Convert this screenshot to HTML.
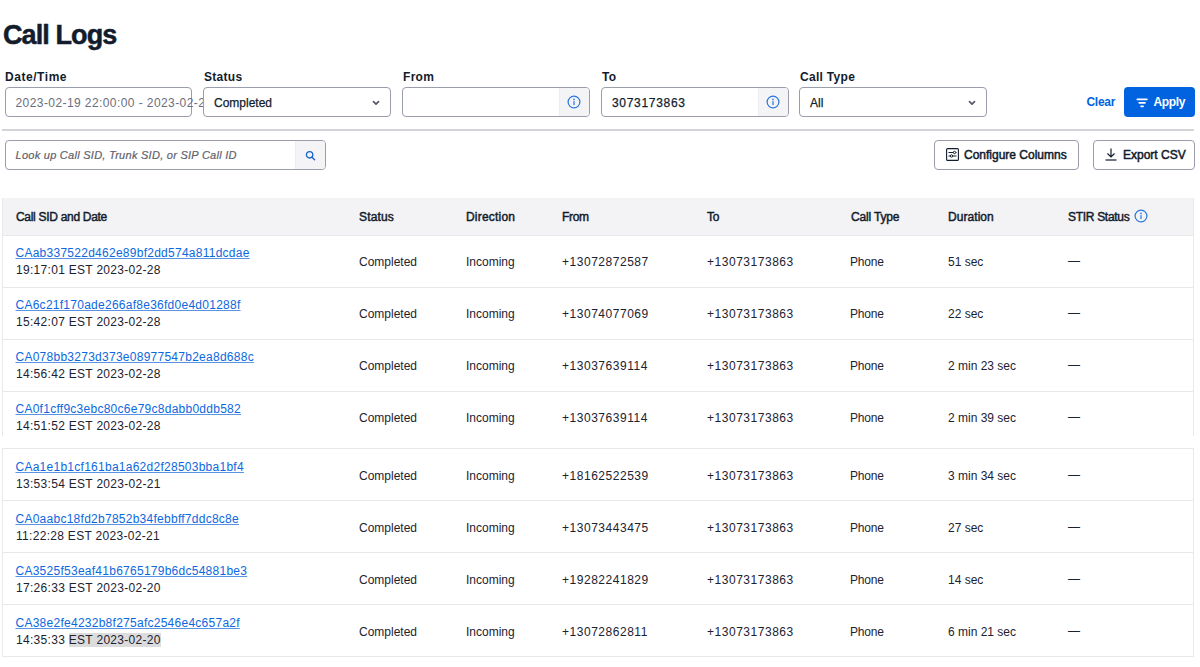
<!DOCTYPE html>
<html><head><meta charset="utf-8">
<style>
*{box-sizing:border-box;margin:0;padding:0}
html,body{width:1200px;height:667px;overflow:hidden;background:#fff}
body{font-family:"Liberation Sans",sans-serif;color:#121c2d;position:relative}
.abs{position:absolute}
h1{position:absolute;left:3px;top:19px;font-size:27px;line-height:32px;font-weight:700;color:#121c2d;letter-spacing:-0.9px;-webkit-text-stroke:0.5px #121c2d;white-space:nowrap}
.lbl{position:absolute;top:70px;letter-spacing:0.3px;font-size:12px;font-weight:700;color:#121c2d;white-space:nowrap}
.inp{position:absolute;top:87px;height:30px;border:1px solid #9a9dab;border-radius:4px;background:#fff;overflow:visible}
.inp .t{position:absolute;left:10px;top:8px;font-size:12px;white-space:nowrap}
.addon{position:absolute;right:0;top:0;bottom:0;width:30px;background:#f4f4f6;border-left:1px solid #ececf1;border-radius:0 3px 3px 0}
.med{-webkit-text-stroke:0.25px #121c2d}
.chev{position:absolute;right:10px;top:12px}
.divider{position:absolute;left:2px;width:1192px;height:2px;background:#d3d4d8}
.btn2{position:absolute;top:140px;height:30px;border:1px solid #9a9dab;border-radius:4px;background:#fff;font-size:12px;font-weight:400;-webkit-text-stroke:0.5px #121c2d;white-space:nowrap;letter-spacing:0px}
table{border-collapse:collapse}
.tbl{position:absolute;left:2px;width:1192px;overflow:hidden;border-left:1px solid #e9e9ec;border-right:1px solid #e9e9ec}
.row{position:absolute;left:0;width:1190px;height:52px;border-top:1px solid #e8e8ea}
.cell{position:absolute;font-size:12px;white-space:nowrap;color:#1c2230}
.hd{font-weight:400;-webkit-text-stroke:0.45px #121c2d;color:#121c2d;letter-spacing:-0.3px}
a{color:#0c68de;text-decoration:underline;text-decoration-color:#5b93e3;text-decoration-thickness:1px;text-underline-offset:0.6px;text-decoration-skip-ink:none;letter-spacing:0.26px}
.dt{letter-spacing:0.3px}
.num{letter-spacing:0.53px}
</style></head>
<body>
<h1>Call Logs</h1>

<div class="lbl" style="left:5px;letter-spacing:0.55px">Date/Time</div>
<div class="lbl" style="left:204px">Status</div>
<div class="lbl" style="left:403px">From</div>
<div class="lbl" style="left:602px">To</div>
<div class="lbl" style="left:800px">Call Type</div>

<div class="inp" style="left:5px;width:187px"><div class="t" style="color:#6b6e7c;letter-spacing:0.42px;left:9.5px">2023-02-19 22:00:00 - 2023-02-28</div></div>
<div class="inp" style="left:203px;width:188px;z-index:2"><div class="t med">Completed</div>
  <svg class="chev" width="8" height="6" viewBox="0 0 8 6"><path d="M1.5 1.6L4 4.1L6.5 1.6" fill="none" stroke="#555a66" stroke-width="1.7" stroke-linecap="round" stroke-linejoin="round"/></svg></div>
<div class="inp" style="left:402px;width:188px"><div class="addon"><svg style="position:absolute;left:7.3px;top:7px" width="14" height="14" viewBox="0 0 14 14"><circle cx="7" cy="7" r="5.9" fill="none" stroke="#2a76dc" stroke-width="1.2"/><circle cx="7" cy="4.4" r="0.85" fill="#2a76dc"/><rect x="6.4" y="6.1" width="1.2" height="4" fill="#2a76dc"/></svg></div></div>
<div class="inp" style="left:601px;width:188px"><div class="t med" style="letter-spacing:0.7px">3073173863</div><div class="addon"><svg style="position:absolute;left:7.3px;top:7px" width="14" height="14" viewBox="0 0 14 14"><circle cx="7" cy="7" r="5.9" fill="none" stroke="#2a76dc" stroke-width="1.2"/><circle cx="7" cy="4.4" r="0.85" fill="#2a76dc"/><rect x="6.4" y="6.1" width="1.2" height="4" fill="#2a76dc"/></svg></div></div>
<div class="inp" style="left:799px;width:188px"><div class="t med">All</div>
  <svg class="chev" width="8" height="6" viewBox="0 0 8 6"><path d="M1.5 1.6L4 4.1L6.5 1.6" fill="none" stroke="#555a66" stroke-width="1.7" stroke-linecap="round" stroke-linejoin="round"/></svg></div>

<div class="abs" style="left:1086.5px;top:95px;font-size:12px;font-weight:700;color:#0263e0;letter-spacing:-0.3px">Clear</div>
<div class="abs" style="left:1124px;top:87px;width:71px;height:30px;background:#0263e0;border-radius:4px;color:#fff;font-size:12px;font-weight:700">
  <svg style="position:absolute;left:11px;top:9.5px" width="14" height="12" viewBox="0 0 14 12"><path d="M2.3 2.3H11.9M4.2 5.8H10M6.1 9.3H8.1" stroke="#fff" stroke-width="1.7" stroke-linecap="round"/></svg>
  <span style="position:absolute;left:29.5px;top:8px;letter-spacing:-0.35px">Apply</span></div>

<div class="divider" style="top:129px"></div>

<div class="inp" style="left:5px;top:140px;width:321px;">
  <div class="t" style="font-style:italic;color:#5f626c;letter-spacing:0.27px;font-size:11px;top:8px;left:9.5px;-webkit-text-stroke:0.2px #5f626c">Look up Call SID, Trunk SID, or SIP Call ID</div>
  <div class="addon" style="width:30px"><svg style="position:absolute;left:9px;top:8.5px" width="11" height="11" viewBox="0 0 11 11"><circle cx="4.6" cy="4.8" r="3.2" fill="none" stroke="#1a63d0" stroke-width="1.3"/><path d="M7 7.2L9.6 9.8" stroke="#1a63d0" stroke-width="1.4" stroke-linecap="round"/></svg></div>
</div>

<div class="btn2" style="left:934px;width:145px">
  <svg style="position:absolute;left:10.5px;top:7.2px" width="13" height="13" viewBox="0 0 13 13"><rect x="0.6" y="0.6" width="11.8" height="11.8" rx="1" fill="none" stroke="#121c2d" stroke-width="1.1"/><path d="M2.5 4.5H10.5M2.5 8H10.5" stroke="#121c2d" stroke-width="1"/><circle cx="8.5" cy="4.5" r="1.2" fill="#fff" stroke="#121c2d" stroke-width="1"/><circle cx="5.5" cy="8" r="1.2" fill="#fff" stroke="#121c2d" stroke-width="1"/></svg>
  <span style="position:absolute;left:29px;top:7px">Configure Columns</span></div>
<div class="btn2" style="left:1093px;width:102px">
  <svg style="position:absolute;left:11px;top:7px" width="12" height="13" viewBox="0 0 12 13"><path d="M6 0.5V9M2.5 5.5L6 9L9.5 5.5" fill="none" stroke="#121c2d" stroke-width="1.2"/><path d="M0.5 12H11.5" stroke="#121c2d" stroke-width="1.2"/></svg>
  <span style="position:absolute;left:29px;top:7px">Export CSV</span></div>



<!-- table part 1 -->
<div class="tbl" style="top:198px;height:238px">
  <div class="abs" style="left:0;top:0;width:1190px;height:37px;background:#f3f3f5">
    <div class="cell hd" style="left:13px;top:12px">Call SID and Date</div>
    <div class="cell hd" style="left:356px;letter-spacing:0.15px;top:12px">Status</div>
    <div class="cell hd" style="left:463px;letter-spacing:0.2px;top:12px">Direction</div>
    <div class="cell hd" style="left:559px;top:12px">From</div>
    <div class="cell hd" style="left:704px;top:12px">To</div>
    <div class="cell hd" style="left:848px;letter-spacing:-0.17px;top:12px">Call Type</div>
    <div class="cell hd" style="left:945px;letter-spacing:0.06px;top:12px">Duration</div>
    <div class="cell hd" style="left:1065px;top:12px">STIR Status</div>
    <svg style="position:absolute;left:1131px;top:11px" width="14" height="14" viewBox="0 0 14 14"><circle cx="7" cy="7" r="5.9" fill="none" stroke="#2a76dc" stroke-width="1.2"/><circle cx="7" cy="4.4" r="0.85" fill="#2a76dc"/><rect x="6.4" y="6.1" width="1.2" height="4" fill="#2a76dc"/></svg>
  </div>
  <div class="row" style="top:37px"><div style="position:absolute;left:0;top:0px">
    <div class="cell" style="left:12.5px;top:10px"><a>CAab337522d462e89bf2dd574a811dcdae</a></div>
    <div class="cell dt" style="left:13px;top:27px">19:17:01 EST 2023-02-28</div>
    <div class="cell" style="left:356px;top:19px">Completed</div>
    <div class="cell" style="left:463px;top:19px">Incoming</div>
    <div class="cell num" style="left:559px;top:19px">+13072872587</div>
    <div class="cell num" style="left:704px;top:19px">+13073173863</div>
    <div class="cell" style="left:847px;top:19px;letter-spacing:-0.2px">Phone</div>
    <div class="cell" style="left:945px;top:19px">51 sec</div>
    <div class="cell" style="left:1065px;top:18px">&mdash;</div>
  </div></div>
<div class="row" style="top:89px"><div style="position:absolute;left:0;top:0px">
    <div class="cell" style="left:12.5px;top:10px"><a>CA6c21f170ade266af8e36fd0e4d01288f</a></div>
    <div class="cell dt" style="left:13px;top:27px">15:42:07 EST 2023-02-28</div>
    <div class="cell" style="left:356px;top:19px">Completed</div>
    <div class="cell" style="left:463px;top:19px">Incoming</div>
    <div class="cell num" style="left:559px;top:19px">+13074077069</div>
    <div class="cell num" style="left:704px;top:19px">+13073173863</div>
    <div class="cell" style="left:847px;top:19px;letter-spacing:-0.2px">Phone</div>
    <div class="cell" style="left:945px;top:19px">22 sec</div>
    <div class="cell" style="left:1065px;top:18px">&mdash;</div>
  </div></div>
<div class="row" style="top:141px"><div style="position:absolute;left:0;top:0px">
    <div class="cell" style="left:12.5px;top:10px"><a>CA078bb3273d373e08977547b2ea8d688c</a></div>
    <div class="cell dt" style="left:13px;top:27px">14:56:42 EST 2023-02-28</div>
    <div class="cell" style="left:356px;top:19px">Completed</div>
    <div class="cell" style="left:463px;top:19px">Incoming</div>
    <div class="cell num" style="left:559px;top:19px">+13037639114</div>
    <div class="cell num" style="left:704px;top:19px">+13073173863</div>
    <div class="cell" style="left:847px;top:19px;letter-spacing:-0.2px">Phone</div>
    <div class="cell" style="left:945px;top:19px">2 min 23 sec</div>
    <div class="cell" style="left:1065px;top:18px">&mdash;</div>
  </div></div>
<div class="row" style="top:193px"><div style="position:absolute;left:0;top:0px">
    <div class="cell" style="left:12.5px;top:10px"><a>CA0f1cff9c3ebc80c6e79c8dabb0ddb582</a></div>
    <div class="cell dt" style="left:13px;top:27px">14:51:52 EST 2023-02-28</div>
    <div class="cell" style="left:356px;top:19px">Completed</div>
    <div class="cell" style="left:463px;top:19px">Incoming</div>
    <div class="cell num" style="left:559px;top:19px">+13037639114</div>
    <div class="cell num" style="left:704px;top:19px">+13073173863</div>
    <div class="cell" style="left:847px;top:19px;letter-spacing:-0.2px">Phone</div>
    <div class="cell" style="left:945px;top:19px">2 min 39 sec</div>
    <div class="cell" style="left:1065px;top:18px">&mdash;</div>
  </div></div>

</div>

<!-- table part 2 -->
<div class="tbl" style="top:448px;height:209px;border-bottom:1px solid #e8e8ea">
  <div class="row" style="top:0px"><div style="position:absolute;left:0;top:1px">
    <div class="cell" style="left:12.5px;top:10px"><a>CAa1e1b1cf161ba1a62d2f28503bba1bf4</a></div>
    <div class="cell dt" style="left:13px;top:27px">13:53:54 EST 2023-02-21</div>
    <div class="cell" style="left:356px;top:19px">Completed</div>
    <div class="cell" style="left:463px;top:19px">Incoming</div>
    <div class="cell num" style="left:559px;top:19px">+18162522539</div>
    <div class="cell num" style="left:704px;top:19px">+13073173863</div>
    <div class="cell" style="left:847px;top:19px;letter-spacing:-0.2px">Phone</div>
    <div class="cell" style="left:945px;top:19px">3 min 34 sec</div>
    <div class="cell" style="left:1065px;top:18px">&mdash;</div>
  </div></div>
<div class="row" style="top:52px"><div style="position:absolute;left:0;top:1px">
    <div class="cell" style="left:12.5px;top:10px"><a>CA0aabc18fd2b7852b34febbff7ddc8c8e</a></div>
    <div class="cell dt" style="left:13px;top:27px">11:22:28 EST 2023-02-21</div>
    <div class="cell" style="left:356px;top:19px">Completed</div>
    <div class="cell" style="left:463px;top:19px">Incoming</div>
    <div class="cell num" style="left:559px;top:19px">+13073443475</div>
    <div class="cell num" style="left:704px;top:19px">+13073173863</div>
    <div class="cell" style="left:847px;top:19px;letter-spacing:-0.2px">Phone</div>
    <div class="cell" style="left:945px;top:19px">27 sec</div>
    <div class="cell" style="left:1065px;top:18px">&mdash;</div>
  </div></div>
<div class="row" style="top:104px"><div style="position:absolute;left:0;top:1px">
    <div class="cell" style="left:12.5px;top:10px"><a>CA3525f53eaf41b6765179b6dc54881be3</a></div>
    <div class="cell dt" style="left:13px;top:27px">17:26:33 EST 2023-02-20</div>
    <div class="cell" style="left:356px;top:19px">Completed</div>
    <div class="cell" style="left:463px;top:19px">Incoming</div>
    <div class="cell num" style="left:559px;top:19px">+19282241829</div>
    <div class="cell num" style="left:704px;top:19px">+13073173863</div>
    <div class="cell" style="left:847px;top:19px;letter-spacing:-0.2px">Phone</div>
    <div class="cell" style="left:945px;top:19px">14 sec</div>
    <div class="cell" style="left:1065px;top:18px">&mdash;</div>
  </div></div>
<div class="row" style="top:156px"><div style="position:absolute;left:0;top:1px">
    <div class="cell" style="left:12.5px;top:10px"><a>CA38e2fe4232b8f275afc2546e4c657a2f</a></div>
    <div class="cell dt" style="left:13px;top:27px">14:35:33 <span style="background:#dcdcdc">EST 2023-02-20</span></div>
    <div class="cell" style="left:356px;top:19px">Completed</div>
    <div class="cell" style="left:463px;top:19px">Incoming</div>
    <div class="cell num" style="left:559px;top:19px">+13072862811</div>
    <div class="cell num" style="left:704px;top:19px">+13073173863</div>
    <div class="cell" style="left:847px;top:19px;letter-spacing:-0.2px">Phone</div>
    <div class="cell" style="left:945px;top:19px">6 min 21 sec</div>
    <div class="cell" style="left:1065px;top:18px">&mdash;</div>
  </div></div>

</div>
</body></html>
